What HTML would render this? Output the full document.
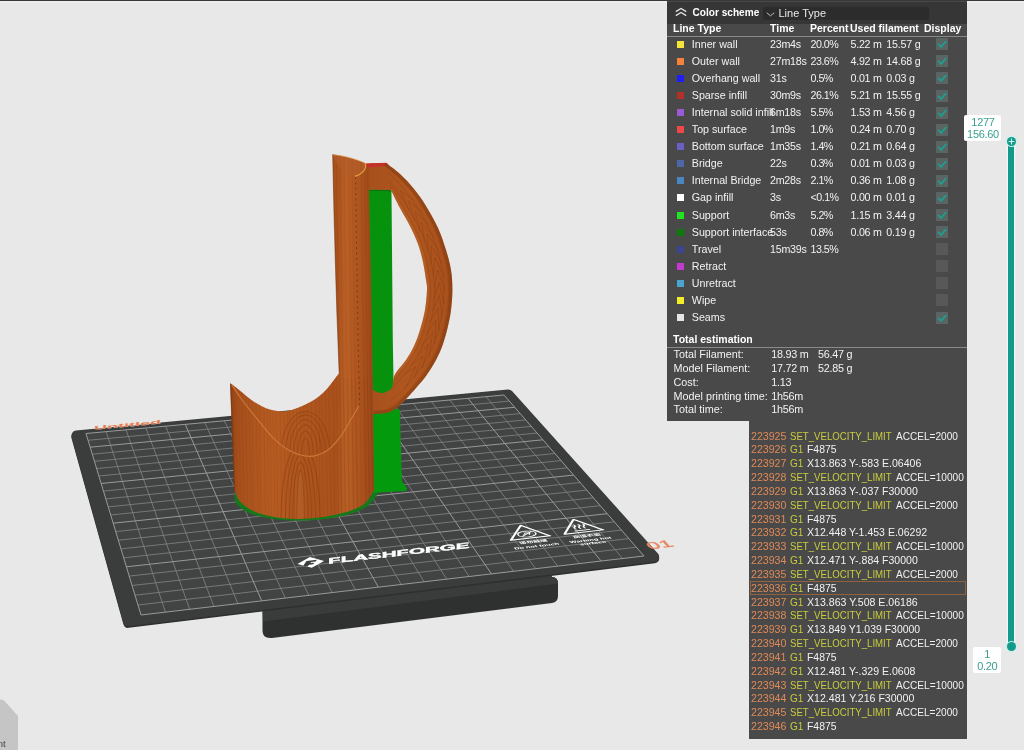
<!DOCTYPE html>
<html lang="en"><head><meta charset="utf-8"><title>Slicer preview</title>
<style>
html,body{margin:0;padding:0}
body{-webkit-font-smoothing:antialiased;width:1024px;height:750px;overflow:hidden;background:#e8e8e8;position:relative;font-family:"Liberation Sans",sans-serif;}
.topline{position:absolute;left:0;top:0;width:1024px;height:1px;background:#383838;box-shadow:0 1.5px 0 #f1f1f1}
.topfill{position:absolute;left:667px;top:1px;width:300px;height:2px;background:#494949}
.scene{position:absolute;left:0;top:0;will-change:transform}
.legend{will-change:transform;position:absolute;left:667px;top:2px;width:300px;height:419px;background:#494949;color:#f2f2f2;font-size:11px;overflow:hidden}
.lhead{position:absolute;left:0;top:0;width:300px;height:22px;background:#363636}
.chev{position:absolute;left:7.8px;top:3px}
.cs{position:absolute;left:25.5px;top:4px;font-weight:bold;font-size:10.1px;line-height:13px;white-space:nowrap;color:#fff}
.combo{position:absolute;left:96px;top:5px;width:166px;height:13px;background:#2c2c2c}
.combo svg{position:absolute;left:3px;top:5px}
.combo span{position:absolute;left:15.5px;top:-0.6px;font-size:11px;line-height:14px;color:#e8e8e8;white-space:nowrap}
.lcols{position:absolute;left:0;top:22px;width:300px;height:12px;border-bottom:1px solid #8a8a8a;font-weight:bold;font-size:10.5px;line-height:12px;color:#fff}
.lcols span{position:absolute;top:-2px;white-space:nowrap}
.lrow{position:absolute;left:0;width:300px;height:13px;line-height:13px;white-space:nowrap}
.lrow i{position:absolute;left:10px;top:3px;width:7px;height:7px}
.lrow span{position:absolute;top:0}
.lrow{font-size:10.7px}.lrow .n{left:24.8px}.lrow .t{left:103px;letter-spacing:-0.25px}.lrow .p{left:143.5px;letter-spacing:-0.5px}.lrow .m{left:183.5px;letter-spacing:-0.25px}.lrow .g{left:219.3px;letter-spacing:-0.22px}
.cb{position:absolute;left:269px;top:0.5px;width:12px;height:12px;background:#585858}
.cb.on{background:#596463}
.cb svg{position:absolute;left:0;top:0}
.tot{position:absolute;left:6px;top:330.5px;font-weight:bold;font-size:10.5px;line-height:13px;color:#fff;white-space:nowrap}
.legend:after{content:"";position:absolute;left:0;top:344.5px;width:300px;height:1px;background:#8a8a8a}
.trow{position:absolute;left:0;width:300px;height:12px;line-height:12px;white-space:nowrap}
.trow span{position:absolute;top:0}
.trow{font-size:10.8px}.trow .k{left:6.5px}.trow .a{left:104.3px;letter-spacing:-0.25px}.trow .b{left:151px;letter-spacing:-0.25px}
.gcode{will-change:transform;position:absolute;left:749px;top:421px;width:218px;height:318px;background:#494949;font-size:11px;color:#f2f2f2;overflow:hidden}
.gl{position:absolute;left:0;width:218px;height:13px;line-height:13px;white-space:pre}
.gl span{position:absolute;top:0;transform-origin:0 50%}
.gl.cur:after{content:"";position:absolute;left:1px;top:-0.8px;width:214px;height:12px;border:1px solid rgba(190,115,60,0.6)}
.ln{color:#e08a58}.cm{color:#c9cc3e}.pa{color:#f2f2f2}
.sbar{position:absolute;left:1008px;top:141px;width:6px;height:506px;background:#139a8b;box-shadow:0 0 0 1.5px #f0f4f3}
.sh{position:absolute;left:1006.5px;width:9px;height:9px;border-radius:50%;background:#139a8b;box-shadow:0 0 0 1px #c4f2ec}
.sh svg{position:absolute;left:0;top:0}
.slab{will-change:transform;position:absolute;background:#fff;border-radius:2px;color:#3a9e90;font-size:11px;text-align:center;letter-spacing:-0.3px}
.slab span{display:block;line-height:12.3px;height:12.3px;padding-left:1px}
.slab span:first-child{margin-top:0.8px}
.cube{position:absolute;left:0;top:0;will-change:transform}
</style></head>
<body>
<svg class="scene" width="1024" height="750" viewBox="0 0 1024 750">
<defs>
<linearGradient id="gBody" x1="0" y1="0" x2="1" y2="0">
<stop offset="0" stop-color="#934117"/><stop offset="0.05" stop-color="#a64f1c"/><stop offset="0.3" stop-color="#b35920"/><stop offset="0.6" stop-color="#ae541e"/><stop offset="0.74" stop-color="#a8501c"/><stop offset="0.8" stop-color="#b55c24"/><stop offset="0.9" stop-color="#ad541f"/><stop offset="1" stop-color="#9a4618"/>
</linearGradient>
<linearGradient id="gHi" x1="0" y1="0" x2="1" y2="0">
<stop offset="0" stop-color="#cc7030" stop-opacity="0"/><stop offset="0.5" stop-color="#cc7030" stop-opacity="0.12"/><stop offset="1" stop-color="#cc7030" stop-opacity="0"/>
</linearGradient>
<linearGradient id="gHi2" x1="0" y1="0" x2="1" y2="0">
<stop offset="0" stop-color="#cc7030" stop-opacity="0"/><stop offset="0.5" stop-color="#cc7030" stop-opacity="0.2"/><stop offset="1" stop-color="#cc7030" stop-opacity="0"/>
</linearGradient>
<linearGradient id="gHandle" x1="0" y1="0" x2="1" y2="0">
<stop offset="0" stop-color="#a64f1c"/><stop offset="0.5" stop-color="#b0571f"/><stop offset="1" stop-color="#a8501c"/>
</linearGradient>
</defs>
<path d="M262.5,606 L549,571 L552,577 Q558,577 558,584 L558,596 Q558,602 552,603 L272,638 Q263,639 262.5,631 Z" fill="#2f3131"/>
<path d="M262.5,606 L549,571 L552,577 Q558,577 558,583.5 L263,621.5 Z" fill="#3a3c3c"/>
<path d="M76.4,435.6 L508.3,394.4 L654.2,556.8 L128.2,621.3Z" transform="translate(0,1.6)" fill="#2e3030" stroke="#2e3030" stroke-width="10" stroke-linejoin="round"/>
<path d="M76.4,435.6 L508.3,394.4 L654.2,556.8 L128.2,621.3Z" fill="#3b3d3d" stroke="#3b3d3d" stroke-width="10" stroke-linejoin="round"/>
<path d="M86,433.5 L504,395 L644,556 L141,615Z" fill="#424444"/>
<path d="M106.1,431.7L165.4,612.1 M88.1,440.3L509.3,401.1 M126,429.8L189.7,609.3 M145.9,428L213.9,606.5 M92.3,454.2L520.1,413.6 M165.7,426.2L237.8,603.6 M94.4,461.3L525.7,419.9 M96.6,468.6L531.3,426.4 M204.8,422.6L285.3,598.1 M98.9,476L537.1,433 M224.3,420.8L308.8,595.3 M243.6,419L332.2,592.6 M103.5,491.1L548.9,446.6 M262.9,417.2L355.4,589.9 M105.8,498.9L554.9,453.5 M108.2,506.9L561,460.6 M301,413.7L401.3,584.5 M110.7,515L567.3,467.8 M320,412L424.1,581.8 M338.8,410.2L446.7,579.1 M115.7,531.6L580.1,482.5 M357.5,408.5L469.2,576.5 M118.3,540.2L586.7,490.1 M121,548.9L593.4,497.8 M394.7,405.1L513.7,571.3 M123.7,557.8L600.2,505.7 M413.2,403.4L535.8,568.7 M431.5,401.7L557.7,566.1 M129.2,576.1L614.3,521.8 M449.8,400L579.5,563.6 M132.1,585.5L621.5,530.1 M135,595.2L628.9,538.6 M486,396.7L622.6,558.5 M138,605L636.4,547.2" stroke="#838585" stroke-width="0.8" fill="none"/>
<path d="M86,433.5L141,615 M86,433.5L504,395 M90.1,447.2L514.7,407.3 M185.3,424.4L261.7,600.8 M101.1,483.5L542.9,439.8 M282,415.4L378.4,587.2 M113.2,523.2L573.6,475.1 M376.2,406.8L491.5,573.9 M126.4,566.8L607.2,513.7 M467.9,398.3L601.1,561 M504,395L644,556 M141,615L644,556" stroke="#989a9a" stroke-width="1" fill="none"/>
<g transform="matrix(0.49697 -0.05628 0.10400 0.19958 327.73 563.88)" fill="#fff">
<path d="M-60,-16 L-33,-42 L-6,-16 L-33,10 Z" transform="skewX(-8)"/>
<path d="M-41,-25 L-20,-25 L-23,-18 L-32,-18 L-34,-13 L-26,-13 L-29,-6 L-37,-6 L-41,2 L-49,-4 Z" fill="#3c3e3e" transform="skewX(-8)"/>
<text x="3" y="0" font-family="'Liberation Sans',sans-serif" font-weight="bold" font-style="italic" font-size="38" textLength="284" lengthAdjust="spacingAndGlyphs" stroke="#fff" stroke-width="1.6">FLASHFORGE</text>
</g>
<g transform="matrix(0.46795 -0.05280 0.14303 0.18797 530.47 538.06)" fill="none" stroke="#fff">
<path d="M0,-68 L42,0 L-42,0 Z" stroke-width="5" stroke-linejoin="round"/>
<g fill="#fff" stroke="none" font-family="'Liberation Sans','Noto Sans CJK SC',sans-serif" text-anchor="middle">
<text x="0" y="25" font-size="15" font-weight="bold">请勿触摸</text>
<text x="0" y="48" font-size="16" font-weight="bold" textLength="96" lengthAdjust="spacingAndGlyphs">Do not touch</text>
</g>
<ellipse cx="-1" cy="-22" rx="19" ry="15" stroke-width="3.2"/><path d="M-14,-12 L12,-32" stroke-width="3"/><path d="M-8,-20 L-2,-29 L6,-26 L3,-17" stroke-width="3"/></g>
<g transform="matrix(0.46085 -0.05200 0.15299 0.18529 583.88 532.03)" fill="none" stroke="#fff">
<path d="M0,-68 L42,0 L-42,0 Z" stroke-width="5" stroke-linejoin="round"/>
<g fill="#fff" stroke="none" font-family="'Liberation Sans','Noto Sans CJK SC',sans-serif" text-anchor="middle">
<text x="0" y="25" font-size="15" font-weight="bold">高温表面</text>
<text x="0" y="48" font-size="16" font-weight="bold" textLength="90" lengthAdjust="spacingAndGlyphs">Warning hot</text>
<text x="0" y="65" font-size="16" font-weight="bold">surface</text>
</g>
<path d="M-17,-10 L17,-10" stroke-width="4.5"/><path d="M-10,-18 q-5,-6 0,-12 q5,-6 0,-12 M0,-18 q-5,-6 0,-12 q5,-6 0,-12 M10,-18 q-5,-6 0,-12 q5,-6 0,-12" stroke-width="3.6"/></g>
<text transform="matrix(0.46177 -0.05352 0.17083 0.19033 659.50 544.60)" x="0" y="17" text-anchor="middle" font-family="'Liberation Sans',sans-serif" font-size="48" fill="#ea8560" stroke="#ea8560" stroke-width="1.5">01</text>
<text transform="matrix(1.2 -0.115 0 0.34 94 429.8)" font-family="'Liberation Sans',sans-serif" font-size="15" font-weight="bold" fill="#e47a50" stroke="#f6d8ca" stroke-width="0.9" paint-order="stroke">Untitled</text>
<path d="M234.5,494 C234.8,495.5 234.1,500.1 236,503 C237.9,505.9 241.7,509.2 246,511.5 C250.3,513.8 255.5,515.5 262,517 C268.5,518.5 276.5,519.8 285,520.3 C293.5,520.8 303.5,521 313,520.3 C322.5,519.6 333.5,518 342,516 C350.5,514 358.2,511.8 364,508.5 C369.8,505.2 374.3,499.4 376.5,496 C378.7,492.6 376.9,489.3 377,488 Z" fill="#15791b"/>
<path d="M366,189.6 L388,189.4 Q391.3,189.6 391.5,193 L392.8,340 L393.8,396 L370,396 L367,340 Z" fill="#07920e"/><path d="M366,190.2 L388,190 Q390.5,190.2 391.2,192" fill="none" stroke="#0a6a10" stroke-width="1.3"/>
<path d="M370,404 L399.8,409.5 L401.9,481 L407.2,488.5 L406,491 L371,492.9 Z" fill="#049a0e"/>
<path d="M386,163 C388.3,164.8 395.3,169.7 400,174 C404.7,178.3 409.7,183.7 414,189 C418.3,194.3 422,199.5 426,206 C430,212.5 434.7,220.7 438,228 C441.3,235.3 443.8,243 446,250 C448.2,257 449.9,263.3 451,270 C452.1,276.7 452.4,283.3 452.4,290 C452.4,296.7 451.7,304 451,310 C450.3,316 449.3,320.3 448,326 C446.7,331.7 445,338.3 443,344 C441,349.7 438.8,354.7 436,360 C433.2,365.3 429.3,371.3 426,376 C422.7,380.7 419,384.5 416,388 C413,391.5 411,393.8 408,397 C405,400.2 401.3,404.4 398,407 C394.7,409.6 392,411.2 388,412.4 C384,413.6 376.3,413.7 374,414 L368,414 L368,390.5 L374,390.5 C375,390.9 378,392.8 380,393 C382,393.2 384,392.9 386,392 C388,391.1 390.7,390.1 392,387.5 C393.3,384.9 393,379.4 394,376.5 C395,373.6 396,372.8 398,370 C400,367.2 403.3,364 406,360 C408.7,356 411.7,351 414,346 C416.3,341 418.2,336 420,330 C421.8,324 423.8,316.7 425,310 C426.2,303.3 426.8,295 427,290 C427.2,285 426.7,284.7 426,280 C425.3,275.3 424.3,268 423,262 C421.7,256 420.2,250 418,244 C415.8,238 413,232 410,226 C407,220 403.2,214 400,208 C396.8,202 392.5,193 391,190 L364,189.5 L364,164 L372,163.2 Z" fill="url(#gHandle)"/>
<path d="M366,163.5 L386.2,162.7 L388.3,164.6 L383,166.3 L367,167.4 Z" fill="#c4302a"/>
<path d="M390.2,185.9 C390.7,186.7 392.2,189 393.1,190.6 C394.1,192.1 395,193.7 396,195.2 C396.9,196.8 397.8,198.3 398.7,199.9 C399.7,201.5 400.5,203.1 401.5,204.7 C402.4,206.2 403.4,207.8 404.4,209.3 C405.3,210.9 406.3,212.5 407.2,214.1 C408.1,215.7 409.1,217.3 410,218.8 C410.9,220.4 411.9,222 412.7,223.6 C413.5,225.3 414.2,227 415,228.6 C415.8,230.3 416.6,232 417.3,233.7 C418.1,235.3 419,237 419.7,238.7 C420.4,240.4 421.1,242.1 421.7,243.8 C422.3,245.5 422.7,247.3 423.2,249.1 C423.8,250.9 424.3,252.6 424.8,254.4 C425.3,256.2 425.9,257.9 426.3,259.7 C426.7,261.5 427.1,263.3 427.4,265.1 C427.8,266.9 428.1,268.7 428.4,270.5 C428.7,272.3 429,274.2 429.2,276 C429.5,277.8 429.8,279.6 430,281.5 C430.2,283.3 430.4,285.1 430.5,287 C430.6,288.8 430.7,290.6 430.6,292.5 C430.5,294.3 430.3,296.1 430.1,298 C429.9,299.8 429.7,301.6 429.5,303.4 C429.3,305.3 429.1,307.1 428.9,308.9 C428.6,310.7 428.3,312.6 427.9,314.4 C427.6,316.2 427,317.9 426.6,319.7 C426.1,321.5 425.7,323.3 425.2,325.1 C424.7,326.8 424.2,328.6 423.7,330.4 C423.2,332.1 422.6,333.9 422,335.6 C421.4,337.3 420.6,339 419.9,340.7 C419.2,342.4 418.5,344.1 417.8,345.8 C417.1,347.5 416.4,349.2 415.6,350.8 C414.7,352.5 413.7,354 412.7,355.5 C411.7,357.1 410.8,358.6 409.8,360.2 C408.8,361.8 407.9,363.4 406.9,364.9 C405.8,366.3 404.5,367.7 403.4,369.1 C402.2,370.5 401,371.9 399.8,373.4 C398.7,374.8 397.5,376.2 396.4,377.6 C395.3,379 393.6,381.2 393.1,381.9" fill="none" stroke="#6e300c" stroke-opacity="0.28" stroke-width="0.8"/>
<path d="M389.4,181.4 C390,182.1 391.7,184.4 392.9,186 C394,187.5 395.2,189 396.3,190.6 C397.5,192.2 398.5,193.8 399.6,195.4 C400.7,197 401.8,198.7 402.9,200.3 C404,201.9 405.1,203.5 406.2,205.1 C407.3,206.8 408.3,208.5 409.3,210.2 C410.4,211.8 411.4,213.5 412.4,215.2 C413.4,216.9 414.5,218.5 415.4,220.3 C416.4,222 417.2,223.8 418,225.6 C418.9,227.4 419.7,229.1 420.6,230.9 C421.5,232.7 422.4,234.4 423.2,236.2 C424,238.1 424.7,239.9 425.3,241.7 C426,243.6 426.5,245.5 427.1,247.4 C427.7,249.3 428.3,251.1 428.9,253 C429.4,254.9 430,256.8 430.5,258.7 C431,260.6 431.3,262.6 431.7,264.5 C432.1,266.4 432.6,268.4 432.9,270.3 C433.2,272.3 433.4,274.2 433.7,276.2 C433.9,278.1 434.2,280.1 434.4,282 C434.6,284 434.7,286 434.8,287.9 C434.9,289.9 434.9,291.9 434.8,293.8 C434.7,295.8 434.5,297.8 434.3,299.7 C434.1,301.7 433.9,303.7 433.6,305.6 C433.4,307.6 433.2,309.5 432.8,311.5 C432.5,313.4 432.2,315.4 431.8,317.3 C431.4,319.2 430.8,321.1 430.3,323 C429.8,324.9 429.3,326.8 428.8,328.7 C428.3,330.6 427.6,332.5 427,334.4 C426.4,336.2 425.8,338.1 425.1,339.9 C424.3,341.8 423.5,343.5 422.7,345.3 C421.9,347.1 421,348.9 420.2,350.7 C419.3,352.4 418.6,354.3 417.6,356 C416.6,357.7 415.4,359.2 414.3,360.9 C413.2,362.5 412.1,364.1 411,365.8 C409.9,367.4 408.9,369 407.7,370.6 C406.5,372.2 405.2,373.6 403.9,375.1 C402.6,376.6 401.3,378.1 400,379.6 C398.7,381 397.4,382.4 396,383.9 C394.7,385.3 392.7,387.3 392.1,388" fill="none" stroke="#6e300c" stroke-opacity="0.28" stroke-width="0.8"/>
<path d="M387.6,171.6 C388.4,172.4 390.8,174.7 392.4,176.3 C393.9,177.8 395.6,179.3 397.1,180.9 C398.6,182.5 400.1,184.2 401.5,185.9 C403,187.6 404.3,189.4 405.8,191.1 C407.2,192.8 408.7,194.5 410,196.3 C411.4,198.1 412.6,200 413.9,201.9 C415.1,203.7 416.4,205.6 417.6,207.5 C418.8,209.4 420.1,211.2 421.3,213.1 C422.4,215.1 423.3,217.1 424.4,219.1 C425.4,221.1 426.5,223.1 427.5,225.1 C428.5,227.1 429.7,229.1 430.6,231.1 C431.6,233.2 432.3,235.3 433.1,237.4 C433.9,239.5 434.6,241.7 435.3,243.8 C436,245.9 436.8,248 437.5,250.2 C438.2,252.3 438.8,254.5 439.3,256.7 C439.9,258.9 440.4,261.1 440.9,263.3 C441.4,265.4 442,267.6 442.4,269.8 C442.8,272.1 442.9,274.3 443.1,276.6 C443.3,278.8 443.6,281 443.7,283.3 C443.9,285.5 444,287.8 444.1,290 C444.1,292.3 443.9,294.5 443.8,296.8 C443.7,299 443.5,301.3 443.3,303.5 C443,305.7 442.7,308 442.4,310.2 C442.1,312.4 441.7,314.6 441.3,316.9 C440.9,319.1 440.5,321.3 439.9,323.5 C439.4,325.7 438.8,327.8 438.2,330 C437.6,332.2 437.1,334.4 436.4,336.5 C435.7,338.7 434.8,340.7 434,342.8 C433.2,344.9 432.4,347 431.5,349.1 C430.6,351.1 429.5,353.1 428.5,355.1 C427.4,357.1 426.3,359 425.2,361 C424.1,362.9 423.1,365 421.8,366.8 C420.6,368.7 419.1,370.4 417.7,372.2 C416.4,374 415,375.8 413.7,377.5 C412.3,379.3 410.9,381.1 409.4,382.8 C408,384.5 406.5,386.2 404.9,387.8 C403.4,389.5 401.9,391.2 400.3,392.7 C398.7,394.3 397,395.7 395.3,397.1 C393.5,398.4 390.8,400.3 389.9,400.9" fill="none" stroke="#6e300c" stroke-opacity="0.28" stroke-width="0.8"/>
<path d="M386.7,166.8 C387.6,167.6 390.3,169.9 392.1,171.4 C393.9,173 395.8,174.4 397.5,176.1 C399.2,177.7 400.9,179.4 402.5,181.1 C404.1,182.9 405.6,184.7 407.2,186.5 C408.8,188.3 410.5,190 412,191.9 C413.5,193.7 414.7,195.8 416.1,197.7 C417.5,199.7 418.8,201.6 420.2,203.6 C421.5,205.6 422.9,207.5 424.2,209.6 C425.4,211.6 426.4,213.8 427.6,215.9 C428.7,218 429.8,220.1 431,222.2 C432.1,224.4 433.3,226.4 434.3,228.6 C435.3,230.7 436.2,233 437,235.2 C437.8,237.5 438.6,239.7 439.4,242 C440.2,244.2 441.1,246.5 441.8,248.8 C442.5,251 443.2,253.3 443.8,255.7 C444.4,258 444.9,260.3 445.5,262.6 C446,265 446.8,267.3 447.2,269.6 C447.5,272 447.6,274.4 447.8,276.7 C448,279.1 448.2,281.5 448.4,283.9 C448.5,286.3 448.7,288.7 448.7,291.1 C448.7,293.4 448.4,295.8 448.3,298.2 C448.1,300.6 448,303 447.7,305.4 C447.5,307.8 447.2,310.1 446.8,312.5 C446.4,314.9 446,317.2 445.5,319.6 C445.1,321.9 444.6,324.2 444,326.6 C443.4,328.9 442.7,331.2 442.1,333.5 C441.5,335.8 441,338.2 440.2,340.4 C439.4,342.7 438.4,344.8 437.5,347.1 C436.6,349.3 435.7,351.5 434.7,353.7 C433.7,355.8 432.5,357.9 431.4,360 C430.2,362.1 428.9,364.1 427.7,366.1 C426.5,368.2 425.3,370.3 424,372.3 C422.6,374.2 421,376 419.5,377.8 C418,379.7 416.5,381.6 415,383.4 C413.4,385.3 411.9,387.1 410.3,388.9 C408.7,390.7 407.1,392.4 405.5,394.2 C403.8,395.9 402.2,397.7 400.5,399.3 C398.7,400.9 396.8,402.3 394.9,403.7 C393,405 389.9,406.8 388.8,407.4" fill="none" stroke="#6e300c" stroke-opacity="0.28" stroke-width="0.8"/>
<path d="M409.1,210.6 L400.6,190.7 L414.4,200.9 M415.1,220.7 L408.1,200.7 L421.9,212.4 M420.2,231.2 L415,211.3 L428.3,224.5 M424.9,242 L421.2,222.4 L434,236.9 M428.4,253.2 L426.9,233.7 L438.4,249.9 M431.2,264.6 L431.2,245.6 L441.9,263.1 M433.2,276.2 L434.9,257.7 L444.2,276.6 M434.3,287.8 L437.7,270.1 L445.1,290.3 M433.8,299.5 L439.1,282.7 L444.3,303.9 M432.4,311.2 L439.3,295.3 L442.2,317.5 M429.9,322.6 L438,307.9 L439,330.8 M426.6,333.9 L435.9,320.4 L434.8,343.8 M422.3,344.8 L432.6,332.6 L429.1,356.2 M417.4,355.4 L428.3,344.5 L422.3,368 M410.9,365.1 L422.7,355.8 L413.9,378.8 M403.8,374.4 L416,366.5 L405.1,389.2" fill="none" stroke="#6e300c" stroke-opacity="0.3" stroke-width="0.8" stroke-linejoin="round"/>
<clipPath id="cHandle"><path d="M386,163 C388.3,164.8 395.3,169.7 400,174 C404.7,178.3 409.7,183.7 414,189 C418.3,194.3 422,199.5 426,206 C430,212.5 434.7,220.7 438,228 C441.3,235.3 443.8,243 446,250 C448.2,257 449.9,263.3 451,270 C452.1,276.7 452.4,283.3 452.4,290 C452.4,296.7 451.7,304 451,310 C450.3,316 449.3,320.3 448,326 C446.7,331.7 445,338.3 443,344 C441,349.7 438.8,354.7 436,360 C433.2,365.3 429.3,371.3 426,376 C422.7,380.7 419,384.5 416,388 C413,391.5 411,393.8 408,397 C405,400.2 401.3,404.4 398,407 C394.7,409.6 392,411.2 388,412.4 C384,413.6 376.3,413.7 374,414 L368,414 L368,390.5 L374,390.5 C375,390.9 378,392.8 380,393 C382,393.2 384,392.9 386,392 C388,391.1 390.7,390.1 392,387.5 C393.3,384.9 393,379.4 394,376.5 C395,373.6 396,372.8 398,370 C400,367.2 403.3,364 406,360 C408.7,356 411.7,351 414,346 C416.3,341 418.2,336 420,330 C421.8,324 423.8,316.7 425,310 C426.2,303.3 426.8,295 427,290 C427.2,285 426.7,284.7 426,280 C425.3,275.3 424.3,268 423,262 C421.7,256 420.2,250 418,244 C415.8,238 413,232 410,226 C407,220 403.2,214 400,208 C396.8,202 392.5,193 391,190 L364,189.5 L364,164 L372,163.2 Z"/></clipPath>
<g clip-path="url(#cHandle)"><path d="M386,163 C388.3,164.8 395.3,169.7 400,174 C404.7,178.3 409.7,183.7 414,189 C418.3,194.3 422,199.5 426,206 C430,212.5 434.7,220.7 438,228 C441.3,235.3 443.8,243 446,250 C448.2,257 449.9,263.3 451,270 C452.1,276.7 452.4,283.3 452.4,290 C452.4,296.7 451.7,304 451,310 C450.3,316 449.3,320.3 448,326 C446.7,331.7 445,338.3 443,344 C441,349.7 438.8,354.7 436,360 C433.2,365.3 429.3,371.3 426,376 C422.7,380.7 419,384.5 416,388 C413,391.5 411,393.8 408,397 C405,400.2 401.3,404.4 398,407 C394.7,409.6 392,411.2 388,412.4 C384,413.6 376.3,413.7 374,414" fill="none" stroke="#6e300c" stroke-opacity="0.38" stroke-width="6.5"/>
<path d="M394,376.5 C394.7,375.4 396,372.8 398,370 C400,367.2 403.3,364 406,360 C408.7,356 411.7,351 414,346 C416.3,341 418.2,336 420,330 C421.8,324 423.8,316.7 425,310 C426.2,303.3 426.8,295 427,290 C427.2,285 426.7,284.7 426,280 C425.3,275.3 424.3,268 423,262 C421.7,256 420.2,250 418,244 C415.8,238 413,232 410,226 C407,220 403.2,214 400,208 C396.8,202 392.5,193 391,190" fill="none" stroke="#bc6a32" stroke-opacity="0.35" stroke-width="5"/></g>
<clipPath id="cBody"><path d="M332.7,154.3 C335.5,154.9 343.9,156.2 349.3,157.7 C354.7,159.1 362.4,162.1 365,163 L368.6,170 C369.1,195 370.9,267 371.8,320 C372.7,373 373.8,460 374.2,488 L374.2,490 C372.4,492.4 369,500.6 363.5,504.5 C358,508.4 349.6,511.2 341,513.5 C332.4,515.8 321.5,517.5 312,518.3 C302.5,519.1 293,519.2 284,518.3 C275,517.4 265.2,515.6 258,513 C250.8,510.4 244.9,506.2 241,502.5 C237.1,498.8 235.7,492.8 234.6,490.8 L230.2,383 C231.7,384.2 235.4,387 239.2,390 C243,393 248.1,397.9 253.2,401.2 C258.3,404.5 264.4,408 270,409.6 C275.6,411.2 280.7,411.9 286.8,411 C292.9,410.1 300.3,407 306.4,404 C312.5,401 317.7,398 323.2,392.8 C328.7,387.6 336.5,376.3 339.2,373 C338.9,364.2 338,343.8 337.2,320 C336.4,296.2 335.2,257.6 334.5,230 C333.8,202.4 333,166.9 332.7,154.3 Z"/></clipPath>
<path d="M332.7,154.3 C335.5,154.9 343.9,156.2 349.3,157.7 C354.7,159.1 362.4,162.1 365,163 L368.6,170 C369.1,195 370.9,267 371.8,320 C372.7,373 373.8,460 374.2,488 L374.2,490 C372.4,492.4 369,500.6 363.5,504.5 C358,508.4 349.6,511.2 341,513.5 C332.4,515.8 321.5,517.5 312,518.3 C302.5,519.1 293,519.2 284,518.3 C275,517.4 265.2,515.6 258,513 C250.8,510.4 244.9,506.2 241,502.5 C237.1,498.8 235.7,492.8 234.6,490.8 L230.2,383 C231.7,384.2 235.4,387 239.2,390 C243,393 248.1,397.9 253.2,401.2 C258.3,404.5 264.4,408 270,409.6 C275.6,411.2 280.7,411.9 286.8,411 C292.9,410.1 300.3,407 306.4,404 C312.5,401 317.7,398 323.2,392.8 C328.7,387.6 336.5,376.3 339.2,373 C338.9,364.2 338,343.8 337.2,320 C336.4,296.2 335.2,257.6 334.5,230 C333.8,202.4 333,166.9 332.7,154.3 Z" fill="url(#gBody)"/>
<g clip-path="url(#cBody)">
<path d="M334,156 C345,157 358,160 365,163 C367,169 362,174 355,176.5 C346,176 337,168 334,156 Z" fill="#b25a26"/>
<rect x="236" y="395" width="70" height="130" fill="url(#gHi)"/>
<rect x="336" y="150" width="22" height="380" fill="url(#gHi2)"/>
<path d="M233,378 C233.2,430 234.6,470 235,522 M235.9,378 C236.9,430 236.7,470 237.9,522 M238.6,378 C239.3,430 239.8,470 240.6,522 M242,378 C241.5,430 244.2,470 244,522 M245.6,378 C245.1,430 247.9,470 247.6,522 M249.1,378 C248.6,430 251.3,470 251.1,522 M251.8,378 C252.3,430 253.2,470 253.8,522 M256.1,378 C255.8,430 258.2,470 258.1,522 M259.1,378 C260,430 260,470 261.1,522 M263.6,378 C264.4,430 264.7,470 265.6,522 M267,378 C268.8,430 267.1,470 269,522 M269.7,378 C271.2,430 270.1,470 271.7,522 M272.9,378 C272.6,430 275,470 274.9,522 M275.7,378 C275.9,430 277.4,470 277.7,522 M280,378 C279.8,430 281.9,470 282,522 M283.7,378 C284.7,430 284.6,470 285.7,522 M287.1,378 C287.8,430 288.2,470 289.1,522 M289.8,378 C289.3,430 292.1,470 291.8,522 M292.8,378 C293.8,430 293.6,470 294.8,522 M296.3,378 C296.4,430 297.9,470 298.3,522 M300,378 C300.5,430 301.4,470 302,522 M303.2,378 C304.5,430 303.7,470 305.2,522 M307.2,378 C307.2,430 309.1,470 309.2,522 M311,378 C311.6,430 312.1,470 313,522 M315.3,378 C316.5,430 316,470 317.3,522 M318.5,378 C320.3,430 318.6,470 320.5,522 M321.4,378 C321.8,430 322.7,470 323.4,522 M325.5,378 C325.2,430 327.5,470 327.5,522 M329,378 C328.5,430 331.3,470 331,522 M333,378 C334.2,430 333.5,470 335,522 M336.7,378 C338.2,430 337,470 338.7,522 M340,378 C341,430 340.7,470 342,522 M343.7,378 C344.5,430 344.8,470 345.7,522 M347.3,378 C348.7,430 347.6,470 349.3,522 M351.7,378 C352.3,430 353,470 353.7,522 M355.7,378 C355.2,430 357.9,470 357.7,522 M359.7,378 C360.6,430 360.5,470 361.7,522 M364.3,378 C365.6,430 364.7,470 366.3,522 M367.4,378 C367.8,430 368.9,470 369.4,522 M371.4,378 C370.8,430 373.7,470 373.4,522" fill="none" stroke="#6e300c" stroke-opacity="0.15" stroke-width="0.8"/>
<clipPath id="cLow"><path d="M231,383 C245,420 270,450 309.6,458 C335,452 350,425 359,404 L380,404 L380,530 L225,530 Z"/></clipPath>
<g clip-path="url(#cLow)"><path d="M297,519 C297.2,453.8 303.8,453.8 304,519 M293,519 C293.4,443.2 307.6,443.2 308,519 M289.5,519 C290.1,433.9 310.9,433.9 311.5,519 M285.5,519 C286.2,425.9 314.8,425.9 315.5,519 M281,519 C282,419.2 319,419.2 320,519" fill="none" stroke="#6e300c" stroke-opacity="0.36" stroke-width="1"/>
<path d="M297,519 C297,455 304,455 304,519 Z" fill="#b5642e" fill-opacity="0.5"/></g>
<clipPath id="cSeam"><path d="M231,383 C245,420 270,450 309.6,456.4 C335,452 350,425 359,404 L359,370 L231,370 Z"/></clipPath>
<g clip-path="url(#cSeam)"><path d="M301.5,457 C301.5,431.7 309.5,431.7 309.5,457 M297.5,457 C297.5,422.4 313.5,422.4 313.5,457 M293.5,457 C293.5,414.4 317.5,414.4 317.5,457 M289.5,457 C289.5,407.1 321.5,407.1 321.5,457 M285.5,457 C285.5,401.1 325.5,401.1 325.5,457 M281,457 C281,396.5 330,396.5 330,457" fill="none" stroke="#6e300c" stroke-opacity="0.32" stroke-width="1"/></g>
<path d="M336.5,158 C338,280 339.7,400 342,522 M340,158 C341.5,280 343.2,400 345.5,522 M344,158 C345.5,280 347.2,400 349.5,522 M348.5,158 C350,280 351.7,400 354,522 M352,158 C353.5,280 355.2,400 357.5,522 M361,158 C362.5,280 364.2,400 366.5,522 M364.5,158 C366,280 367.7,400 370,522 M367.5,158 C369,280 370.7,400 373,522" fill="none" stroke="#6e300c" stroke-opacity="0.15" stroke-width="0.8"/>
</g>
<path d="M230.6,384 L234.5,490" fill="none" stroke="#74340e" stroke-opacity="0.7" stroke-width="1.2"/>
<path d="M339.2,373 C338.9,364.2 338,343.8 337.2,320 C336.4,296.2 335.2,257.6 334.5,230 C333.8,202.4 333,166.9 332.7,154.3" fill="none" stroke="#74340e" stroke-opacity="0.55" stroke-width="1.1"/>
<path d="M355.6,177 C356.3,240 357.5,320 359.6,405" fill="none" stroke="#6b2f0c" stroke-opacity="0.75" stroke-width="1" stroke-dasharray="2 3.4"/>
<path d="M231.7,384.5 C233.1,386.6 236.6,392.3 240,397 C243.4,401.7 246.4,405.7 252,412.6 C257.6,419.5 266.9,431.8 273.3,438.2 C279.7,444.6 284.3,448 290.4,451 C296.4,454 303.6,456.4 309.6,456.4 C315.6,456.4 321.6,454 326.6,451 C331.6,448 335.5,443.2 339.4,438.2 C343.3,433.2 346.8,426.3 350,421 C353.2,415.7 357.2,408.8 358.6,406.3" fill="none" stroke="#d07e3c" stroke-opacity="0.85" stroke-width="1.2"/>
<path d="M333,154.8 C345,155.7 358,159.7 365,163.2" fill="none" stroke="#e0a060" stroke-opacity="0.7" stroke-width="1"/>
<path d="M365,163.2 C367.5,169 362,174 355,176.4" fill="none" stroke="#dfa238" stroke-width="1.2"/>
</svg>
<svg class="cube" width="40" height="750" viewBox="0 0 40 750"><path d="M0,699.5 Q3,699 5,701.5 L18,716 L18,750 L0,750 Z" fill="#c5c5c5"/><text x="-7.5" y="747" font-family="'Liberation Sans',sans-serif" font-size="9.5" fill="#444">ont</text></svg>
<div class="topline"></div><div class="topfill"></div>
<div class="legend">
<div class="lhead"><svg class="chev" width="12" height="12" viewBox="0 0 12 12"><path d="M0.8,6.6 L6,3.4 L11.2,6.6 M0.8,10.6 L6,7.4 L11.2,10.6" fill="none" stroke="#e4e4e4" stroke-width="1.25"/></svg><span class="cs">Color scheme</span><div class="combo"><svg width="9" height="5" viewBox="0 0 9 5"><path d="M0.8,0.8 L4.5,3.8 L8.2,0.8" fill="none" stroke="#bdbdbd" stroke-width="1"/></svg><span>Line Type</span></div></div>
<div class="lcols"><span style="left:6px">Line Type</span><span style="left:103px">Time</span><span style="left:143px">Percent</span><span style="left:183px">Used filament</span><span style="left:257px">Display</span></div>
<div class="lrow" style="top:35.80px"><i style="background:#f6e43a"></i><span class="n">Inner wall</span><span class="t">23m4s</span><span class="p">20.0%</span><span class="m">5.22 m</span><span class="g">15.57 g</span><b class="cb on"><svg width="12" height="12" viewBox="0 0 12 12"><path d="M2.2,5.8 L5.2,8.8 L10.2,3" fill="none" stroke="#1f9e8e" stroke-width="1.9"/></svg></b></div>
<div class="lrow" style="top:52.88px"><i style="background:#f5813a"></i><span class="n">Outer wall</span><span class="t">27m18s</span><span class="p">23.6%</span><span class="m">4.92 m</span><span class="g">14.68 g</span><b class="cb on"><svg width="12" height="12" viewBox="0 0 12 12"><path d="M2.2,5.8 L5.2,8.8 L10.2,3" fill="none" stroke="#1f9e8e" stroke-width="1.9"/></svg></b></div>
<div class="lrow" style="top:69.95px"><i style="background:#1f1ff5"></i><span class="n">Overhang wall</span><span class="t">31s</span><span class="p">0.5%</span><span class="m">0.01 m</span><span class="g">0.03 g</span><b class="cb on"><svg width="12" height="12" viewBox="0 0 12 12"><path d="M2.2,5.8 L5.2,8.8 L10.2,3" fill="none" stroke="#1f9e8e" stroke-width="1.9"/></svg></b></div>
<div class="lrow" style="top:87.02px"><i style="background:#b3302a"></i><span class="n">Sparse infill</span><span class="t">30m9s</span><span class="p">26.1%</span><span class="m">5.21 m</span><span class="g">15.55 g</span><b class="cb on"><svg width="12" height="12" viewBox="0 0 12 12"><path d="M2.2,5.8 L5.2,8.8 L10.2,3" fill="none" stroke="#1f9e8e" stroke-width="1.9"/></svg></b></div>
<div class="lrow" style="top:104.10px"><i style="background:#9a5ad6"></i><span class="n">Internal solid infill</span><span class="t">6m18s</span><span class="p">5.5%</span><span class="m">1.53 m</span><span class="g">4.56 g</span><b class="cb on"><svg width="12" height="12" viewBox="0 0 12 12"><path d="M2.2,5.8 L5.2,8.8 L10.2,3" fill="none" stroke="#1f9e8e" stroke-width="1.9"/></svg></b></div>
<div class="lrow" style="top:121.17px"><i style="background:#ee4848"></i><span class="n">Top surface</span><span class="t">1m9s</span><span class="p">1.0%</span><span class="m">0.24 m</span><span class="g">0.70 g</span><b class="cb on"><svg width="12" height="12" viewBox="0 0 12 12"><path d="M2.2,5.8 L5.2,8.8 L10.2,3" fill="none" stroke="#1f9e8e" stroke-width="1.9"/></svg></b></div>
<div class="lrow" style="top:138.25px"><i style="background:#6a5fc4"></i><span class="n">Bottom surface</span><span class="t">1m35s</span><span class="p">1.4%</span><span class="m">0.21 m</span><span class="g">0.64 g</span><b class="cb on"><svg width="12" height="12" viewBox="0 0 12 12"><path d="M2.2,5.8 L5.2,8.8 L10.2,3" fill="none" stroke="#1f9e8e" stroke-width="1.9"/></svg></b></div>
<div class="lrow" style="top:155.32px"><i style="background:#4f66a8"></i><span class="n">Bridge</span><span class="t">22s</span><span class="p">0.3%</span><span class="m">0.01 m</span><span class="g">0.03 g</span><b class="cb on"><svg width="12" height="12" viewBox="0 0 12 12"><path d="M2.2,5.8 L5.2,8.8 L10.2,3" fill="none" stroke="#1f9e8e" stroke-width="1.9"/></svg></b></div>
<div class="lrow" style="top:172.40px"><i style="background:#4a86c2"></i><span class="n">Internal Bridge</span><span class="t">2m28s</span><span class="p">2.1%</span><span class="m">0.36 m</span><span class="g">1.08 g</span><b class="cb on"><svg width="12" height="12" viewBox="0 0 12 12"><path d="M2.2,5.8 L5.2,8.8 L10.2,3" fill="none" stroke="#1f9e8e" stroke-width="1.9"/></svg></b></div>
<div class="lrow" style="top:189.47px"><i style="background:#ffffff"></i><span class="n">Gap infill</span><span class="t">3s</span><span class="p">&lt;0.1%</span><span class="m">0.00 m</span><span class="g">0.01 g</span><b class="cb on"><svg width="12" height="12" viewBox="0 0 12 12"><path d="M2.2,5.8 L5.2,8.8 L10.2,3" fill="none" stroke="#1f9e8e" stroke-width="1.9"/></svg></b></div>
<div class="lrow" style="top:206.55px"><i style="background:#1fe41f"></i><span class="n">Support</span><span class="t">6m3s</span><span class="p">5.2%</span><span class="m">1.15 m</span><span class="g">3.44 g</span><b class="cb on"><svg width="12" height="12" viewBox="0 0 12 12"><path d="M2.2,5.8 L5.2,8.8 L10.2,3" fill="none" stroke="#1f9e8e" stroke-width="1.9"/></svg></b></div>
<div class="lrow" style="top:223.62px"><i style="background:#0c7a0c"></i><span class="n">Support interface</span><span class="t">53s</span><span class="p">0.8%</span><span class="m">0.06 m</span><span class="g">0.19 g</span><b class="cb on"><svg width="12" height="12" viewBox="0 0 12 12"><path d="M2.2,5.8 L5.2,8.8 L10.2,3" fill="none" stroke="#1f9e8e" stroke-width="1.9"/></svg></b></div>
<div class="lrow" style="top:240.70px"><i style="background:#3a4690"></i><span class="n">Travel</span><span class="t">15m39s</span><span class="p">13.5%</span><span class="m"></span><span class="g"></span><b class="cb"></b></div>
<div class="lrow" style="top:257.77px"><i style="background:#c43ad0"></i><span class="n">Retract</span><span class="t"></span><span class="p"></span><span class="m"></span><span class="g"></span><b class="cb"></b></div>
<div class="lrow" style="top:274.85px"><i style="background:#4aa6d0"></i><span class="n">Unretract</span><span class="t"></span><span class="p"></span><span class="m"></span><span class="g"></span><b class="cb"></b></div>
<div class="lrow" style="top:291.93px"><i style="background:#f2ee2a"></i><span class="n">Wipe</span><span class="t"></span><span class="p"></span><span class="m"></span><span class="g"></span><b class="cb"></b></div>
<div class="lrow" style="top:309.00px"><i style="background:#e6e6e6"></i><span class="n">Seams</span><span class="t"></span><span class="p"></span><span class="m"></span><span class="g"></span><b class="cb on"><svg width="12" height="12" viewBox="0 0 12 12"><path d="M2.2,5.8 L5.2,8.8 L10.2,3" fill="none" stroke="#1f9e8e" stroke-width="1.9"/></svg></b></div>
<div class="tot">Total estimation</div>
<div class="trow" style="top:346.20px"><span class="k">Total Filament:</span><span class="a">18.93 m</span><span class="b">56.47 g</span></div>
<div class="trow" style="top:360.00px"><span class="k">Model Filament:</span><span class="a">17.72 m</span><span class="b">52.85 g</span></div>
<div class="trow" style="top:373.80px"><span class="k">Cost:</span><span class="a">1.13</span><span class="b"></span></div>
<div class="trow" style="top:387.60px"><span class="k">Model printing time:</span><span class="a">1h56m</span><span class="b"></span></div>
<div class="trow" style="top:401.40px"><span class="k">Total time:</span><span class="a">1h56m</span><span class="b"></span></div>
</div>
<div class="gcode">
<div class="gl" style="top:8.50px"><span class="ln" style="left:2.3px;transform:scaleX(0.9650)">223925</span><span class="cm" style="left:41.2px;transform:scaleX(0.8750)">SET_VELOCITY_LIMIT</span><span class="pa" style="left:146.8px;transform:scaleX(0.9161)">ACCEL=2000</span></div>
<div class="gl" style="top:22.34px"><span class="ln" style="left:2.3px;transform:scaleX(0.9650)">223926</span><span class="cm" style="left:41.2px;transform:scaleX(0.9125)">G1</span><span class="pa" style="left:57.6px;transform:scaleX(0.9456)">F4875</span></div>
<div class="gl" style="top:36.18px"><span class="ln" style="left:2.3px;transform:scaleX(0.9650)">223927</span><span class="cm" style="left:41.2px;transform:scaleX(0.9125)">G1</span><span class="pa" style="left:57.6px;transform:scaleX(0.9582)">X13.863 Y-.583 E.06406</span></div>
<div class="gl" style="top:50.02px"><span class="ln" style="left:2.3px;transform:scaleX(0.9650)">223928</span><span class="cm" style="left:41.2px;transform:scaleX(0.8750)">SET_VELOCITY_LIMIT</span><span class="pa" style="left:146.8px;transform:scaleX(0.9202)">ACCEL=10000</span></div>
<div class="gl" style="top:63.86px"><span class="ln" style="left:2.3px;transform:scaleX(0.9650)">223929</span><span class="cm" style="left:41.2px;transform:scaleX(0.9125)">G1</span><span class="pa" style="left:57.6px;transform:scaleX(0.9584)">X13.863 Y-.037 F30000</span></div>
<div class="gl" style="top:77.70px"><span class="ln" style="left:2.3px;transform:scaleX(0.9650)">223930</span><span class="cm" style="left:41.2px;transform:scaleX(0.8750)">SET_VELOCITY_LIMIT</span><span class="pa" style="left:146.8px;transform:scaleX(0.9161)">ACCEL=2000</span></div>
<div class="gl" style="top:91.54px"><span class="ln" style="left:2.3px;transform:scaleX(0.9650)">223931</span><span class="cm" style="left:41.2px;transform:scaleX(0.9125)">G1</span><span class="pa" style="left:57.6px;transform:scaleX(0.9456)">F4875</span></div>
<div class="gl" style="top:105.38px"><span class="ln" style="left:2.3px;transform:scaleX(0.9650)">223932</span><span class="cm" style="left:41.2px;transform:scaleX(0.9125)">G1</span><span class="pa" style="left:57.6px;transform:scaleX(0.9585)">X12.448 Y-1.453 E.06292</span></div>
<div class="gl" style="top:119.22px"><span class="ln" style="left:2.3px;transform:scaleX(0.9650)">223933</span><span class="cm" style="left:41.2px;transform:scaleX(0.8750)">SET_VELOCITY_LIMIT</span><span class="pa" style="left:146.8px;transform:scaleX(0.9202)">ACCEL=10000</span></div>
<div class="gl" style="top:133.06px"><span class="ln" style="left:2.3px;transform:scaleX(0.9650)">223934</span><span class="cm" style="left:41.2px;transform:scaleX(0.9125)">G1</span><span class="pa" style="left:57.6px;transform:scaleX(0.9584)">X12.471 Y-.884 F30000</span></div>
<div class="gl" style="top:146.90px"><span class="ln" style="left:2.3px;transform:scaleX(0.9650)">223935</span><span class="cm" style="left:41.2px;transform:scaleX(0.8750)">SET_VELOCITY_LIMIT</span><span class="pa" style="left:146.8px;transform:scaleX(0.9161)">ACCEL=2000</span></div>
<div class="gl cur" style="top:160.74px"><span class="ln" style="left:2.3px;transform:scaleX(0.9650)">223936</span><span class="cm" style="left:41.2px;transform:scaleX(0.9125)">G1</span><span class="pa" style="left:57.6px;transform:scaleX(0.9456)">F4875</span></div>
<div class="gl" style="top:174.58px"><span class="ln" style="left:2.3px;transform:scaleX(0.9650)">223937</span><span class="cm" style="left:41.2px;transform:scaleX(0.9125)">G1</span><span class="pa" style="left:57.6px;transform:scaleX(0.9613)">X13.863 Y.508 E.06186</span></div>
<div class="gl" style="top:188.42px"><span class="ln" style="left:2.3px;transform:scaleX(0.9650)">223938</span><span class="cm" style="left:41.2px;transform:scaleX(0.8750)">SET_VELOCITY_LIMIT</span><span class="pa" style="left:146.8px;transform:scaleX(0.9202)">ACCEL=10000</span></div>
<div class="gl" style="top:202.26px"><span class="ln" style="left:2.3px;transform:scaleX(0.9650)">223939</span><span class="cm" style="left:41.2px;transform:scaleX(0.9125)">G1</span><span class="pa" style="left:57.6px;transform:scaleX(0.9504)">X13.849 Y1.039 F30000</span></div>
<div class="gl" style="top:216.10px"><span class="ln" style="left:2.3px;transform:scaleX(0.9650)">223940</span><span class="cm" style="left:41.2px;transform:scaleX(0.8750)">SET_VELOCITY_LIMIT</span><span class="pa" style="left:146.8px;transform:scaleX(0.9161)">ACCEL=2000</span></div>
<div class="gl" style="top:229.94px"><span class="ln" style="left:2.3px;transform:scaleX(0.9650)">223941</span><span class="cm" style="left:41.2px;transform:scaleX(0.9125)">G1</span><span class="pa" style="left:57.6px;transform:scaleX(0.9456)">F4875</span></div>
<div class="gl" style="top:243.78px"><span class="ln" style="left:2.3px;transform:scaleX(0.9650)">223942</span><span class="cm" style="left:41.2px;transform:scaleX(0.9125)">G1</span><span class="pa" style="left:57.6px;transform:scaleX(0.9578)">X12.481 Y-.329 E.0608</span></div>
<div class="gl" style="top:257.62px"><span class="ln" style="left:2.3px;transform:scaleX(0.9650)">223943</span><span class="cm" style="left:41.2px;transform:scaleX(0.8750)">SET_VELOCITY_LIMIT</span><span class="pa" style="left:146.8px;transform:scaleX(0.9202)">ACCEL=10000</span></div>
<div class="gl" style="top:271.46px"><span class="ln" style="left:2.3px;transform:scaleX(0.9650)">223944</span><span class="cm" style="left:41.2px;transform:scaleX(0.9125)">G1</span><span class="pa" style="left:57.6px;transform:scaleX(0.9617)">X12.481 Y.216 F30000</span></div>
<div class="gl" style="top:285.30px"><span class="ln" style="left:2.3px;transform:scaleX(0.9650)">223945</span><span class="cm" style="left:41.2px;transform:scaleX(0.8750)">SET_VELOCITY_LIMIT</span><span class="pa" style="left:146.8px;transform:scaleX(0.9161)">ACCEL=2000</span></div>
<div class="gl" style="top:299.14px"><span class="ln" style="left:2.3px;transform:scaleX(0.9650)">223946</span><span class="cm" style="left:41.2px;transform:scaleX(0.9125)">G1</span><span class="pa" style="left:57.6px;transform:scaleX(0.9456)">F4875</span></div>
</div>
<div class="sbar"></div>
<div class="sh" style="top:137px"><svg width="9" height="9" viewBox="0 0 9 9"><path d="M4.5,1.6 V7.4 M1.6,4.5 H7.4" stroke="#c9f0ea" stroke-width="1.1" fill="none"/></svg></div>
<div class="sh" style="top:642.2px"></div>
<div class="slab" style="left:963.5px;top:115px;width:37px;height:26px"><span>1277</span><span>156.60</span></div>
<div class="slab" style="left:973px;top:647px;width:27.5px;height:25.5px"><span>1</span><span>0.20</span></div>
</body></html>
